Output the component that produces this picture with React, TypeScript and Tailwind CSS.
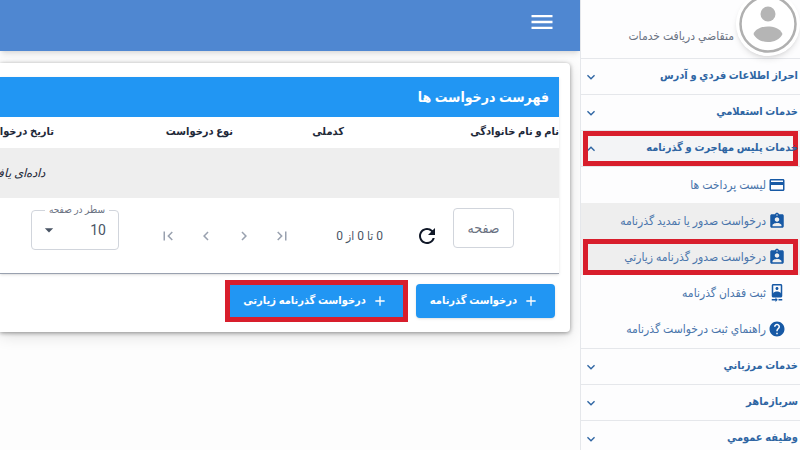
import type { ReactNode } from 'react';
import {
  MdAdd,
  MdArrowDropDown,
  MdAssignmentInd,
  MdCameraFront,
  MdChevronLeft,
  MdChevronRight,
  MdExpandLess,
  MdExpandMore,
  MdFirstPage,
  MdHelp,
  MdLastPage,
  MdMenu,
  MdPayment,
  MdRefresh,
} from 'react-icons/md';

const passportLinks = [
  { label: 'لیست پرداخت ها', icon: MdPayment },
  { label: 'درخواست صدور یا تمدید گذرنامه', icon: MdAssignmentInd, active: true },
  { label: 'درخواست صدور گذرنامه زیارتي', icon: MdAssignmentInd, active: true, marked: true },
  { label: 'ثبت فقدان گذرنامه', icon: MdCameraFront },
  { label: 'راهنماي ثبت درخواست گذرنامه', icon: MdHelp },
];

const sections = [
  { label: 'احراز اطلاعات فردي و آدرس' },
  { label: 'خدمات استعلامي' },
  { label: 'خدمات پليس مهاجرت و گذرنامه', links: passportLinks },
  { label: 'خدمات مرزباني' },
  { label: 'سربازماهر' },
  { label: 'وظيفه عمومي' },
];

function RowMarker() {
  return <span className="pointer-events-none absolute inset-x-0.5 inset-y-0 border-5 border-[#d81e2c]" />;
}

function Sidebar() {
  return (
    <aside className="w-[220px] shrink-0 border-l border-gray-200 bg-[#fdfdfe]">
      <div className="flex h-[59px] items-end gap-0.5 border-b border-gray-200 pb-0.5">
        <svg viewBox="0 0 64 64" className="size-16 shrink-0 rounded-full shadow-md" aria-hidden="true">
          <circle cx="32" cy="32" r="32" fill="#fff" />
          <circle cx="32" cy="32" r="27.5" fill="#fff" stroke="#b0b0b0" strokeWidth="2.5" />
          <circle cx="32" cy="22" r="7.5" fill="#b5b5b5" />
          <path d="M17.500 42C20 36 27 34.500 32 34.500S44 36 46.500 42C44 47.500 38 50 32 50S20 47.500 17.500 42Z" fill="#b5b5b5" />
        </svg>
        <span className="whitespace-nowrap pb-3 text-xs text-gray-500">متقاضي دريافت خدمات</span>
      </div>

      <nav>
        {sections.map((section) => (
          <div key={section.label} className="border-b border-gray-200">
            <button
              className={
                section.links
                  ? 'relative flex h-[35px] w-full items-center justify-between bg-gray-100 px-0.5 text-[11px] font-bold text-[#2e65a3]'
                  : 'flex h-[35px] w-full items-center justify-between px-0.5 text-[11px] font-bold text-[#2e65a3]'
              }
            >
              {section.links && <RowMarker />}
              <span className="relative">{section.label}</span>
              {section.links ? <MdExpandLess className="size-4" /> : <MdExpandMore className="size-4" />}
            </button>
            {section.links && (
              <div className="border-t border-gray-200 pb-px">
                {section.links.map(({ label, icon: Icon, active, marked }) => (
                  <a
                    key={label}
                    href="#"
                    className={
                      active
                        ? 'relative flex h-9 items-center gap-0.5 whitespace-nowrap bg-[#eeeeee] ps-3.5 text-xs text-[#4a75ab]'
                        : 'flex h-9 items-center gap-0.5 whitespace-nowrap ps-3.5 text-xs text-[#4a75ab]'
                    }
                  >
                    <Icon className="size-[18px] shrink-0 text-[#1759a5]" />
                    {label}
                    {marked && <RowMarker />}
                  </a>
                ))}
              </div>
            )}
          </div>
        ))}
      </nav>
    </aside>
  );
}

function ActionButton({ children }: { children: ReactNode }) {
  return (
    <button className="flex h-[34px] items-center gap-1.5 whitespace-nowrap rounded bg-[#2196f3] ps-4 pe-3.5 text-[11px] font-bold text-white shadow">
      <MdAdd className="size-4" />
      {children}
    </button>
  );
}

function RequestTable() {
  return (
    <table className="w-[1110px] table-fixed text-xs text-gray-800">
      <thead>
        <tr className="h-[31px] text-[11px]">
          <th className="w-[215px] text-start font-bold">نام و نام خانوادگی</th>
          <th className="w-[111px] text-start font-bold">کدملی</th>
          <th className="w-[179px] text-start font-bold">نوع درخواست</th>
          <th className="text-start font-bold">تاریخ درخواست</th>
        </tr>
      </thead>
      <tbody>
        <tr className="h-[50px] bg-[#eeeeee]">
          <td colSpan={4} className="text-center italic">
            داده‌ای یافت نشد
          </td>
        </tr>
      </tbody>
    </table>
  );
}

function Pagination() {
  return (
    <div className="flex h-[75px] items-center ps-[45px] text-gray-600">
      <input
        aria-label="صفحه"
        placeholder="صفحه"
        className="-mt-4 h-10 w-[61px] rounded border border-gray-300 text-center text-sm placeholder:text-gray-500"
      />
      <button aria-label="بارگذاری مجدد" className="ms-3.5 text-gray-900">
        <MdRefresh className="size-6" />
      </button>
      <span className="ms-8 w-14 whitespace-nowrap text-xs">0 تا 0 از 0</span>
      <div className="ms-9 flex gap-5 text-gray-400">
        <button aria-label="صفحه اول">
          <MdLastPage className="size-[18px]" />
        </button>
        <button aria-label="صفحه قبل">
          <MdChevronRight className="size-[18px]" />
        </button>
        <button aria-label="صفحه بعد">
          <MdChevronLeft className="size-[18px]" />
        </button>
        <button aria-label="صفحه آخر">
          <MdFirstPage className="size-[18px]" />
        </button>
      </div>
      <div className="relative ms-10 -mt-3">
        <label htmlFor="rows" className="absolute -top-2 start-2.5 whitespace-nowrap bg-white px-1 text-[10px] text-gray-500">
          سطر در صفحه
        </label>
        <select id="rows" className="h-10 w-[88px] appearance-none rounded border border-gray-300 px-3 text-sm">
          <option>10</option>
        </select>
        <MdArrowDropDown className="pointer-events-none absolute end-2 top-2.5 size-5" />
      </div>
    </div>
  );
}

export default function App() {
  return (
    <div
      dir="rtl"
      className="flex h-screen overflow-hidden bg-[#fdfdfd] font-['Roboto','DejaVu_Sans_Condensed','DejaVu_Sans',sans-serif]"
    >
      <Sidebar />
      <main className="min-w-0 flex-1 overflow-hidden">
        <header className="flex h-[51px] items-center bg-[#4f87d1] px-6 pb-2 shadow-md">
          <button aria-label="منو" className="text-white">
            <MdMenu className="size-7" />
          </button>
        </header>

        <section className="ms-2.5 mt-3 rounded-s bg-white ps-[11px] pt-3.5 shadow-[0_1px_4px_rgba(0,0,0,0.4),0_4px_16px_rgba(0,0,0,0.12)]">
          <div className="overflow-hidden border-b border-gray-400 shadow-sm">
            <h1 className="flex h-10 items-center bg-[#2196f3] ps-2.5 text-sm font-bold text-white">
              فهرست درخواست ها
            </h1>
            <RequestTable />
            <Pagination />
          </div>
          <div className="flex items-center gap-3 pt-2.5 pb-3.5 ps-1">
            <ActionButton>درخواست گذرنامه</ActionButton>
            <div className="relative">
              <ActionButton>درخواست گذرنامه زیارتی</ActionButton>
              <span className="pointer-events-none absolute -inset-1 border-5 border-[#d81e2c]" />
            </div>
          </div>
        </section>
      </main>
    </div>
  );
}
